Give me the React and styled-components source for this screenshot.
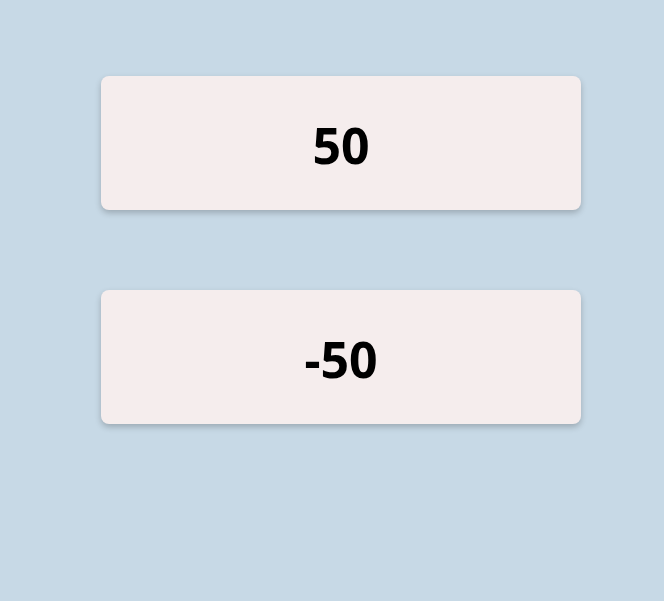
import React from 'react';
import styled, { createGlobalStyle } from 'styled-components';

const GlobalStyle = createGlobalStyle`
    html, body {
        margin: 0;
        padding: 0;
        background: #c7d9e6;
        font-family: 'Noto Sans', sans-serif;
    }
`;

const Page = styled.div`
    display: flex;
    flex-direction: column;
    gap: 80px;
    padding: 76px 83px 0 101px;
    min-height: 601px;
    box-sizing: border-box;
`;

const Card = styled.div`
    display: flex;
    align-items: center;
    justify-content: center;
    width: 480px;
    height: 134px;
    padding-top: 4px;
    box-sizing: border-box;
    background-color: #f5eded;
    border-radius: 8px;
    box-shadow: 0 3px 6px rgba(0, 0, 0, 0.22);
    font-size: 50px;
    font-weight: 700;
    color: #000;
`;

const values = [50, -50];

const App = () => (
    <>
        <GlobalStyle />
        <Page>
            {values.map((v) => (
                <Card key={v}>{v}</Card>
            ))}
        </Page>
    </>
);

export default App;
